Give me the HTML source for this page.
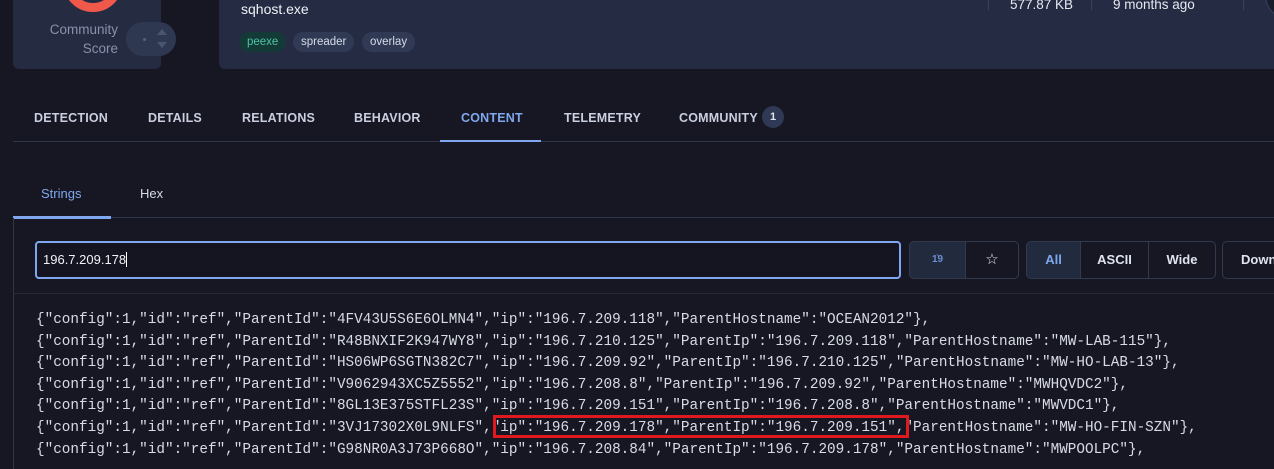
<!DOCTYPE html>
<html><head><meta charset="utf-8"><style>
*{margin:0;padding:0;box-sizing:border-box}
body{width:1274px;height:469px;overflow:hidden;background:#161722;font-family:"Liberation Sans","DejaVu Sans",sans-serif;position:relative;color:#d0d4e0}
.a{position:absolute;white-space:nowrap}
.card{position:absolute;background:#252c42;border-radius:6px}
.tab{position:absolute;top:111px;font-size:12.5px;font-weight:bold;color:#c9cee0;letter-spacing:.2px}
.tag{position:absolute;top:32px;height:20px;border-radius:10px;background:#303a55;color:#d6dbe8;font-size:11.5px;line-height:20px;padding:0 8px}
.btn{position:absolute;top:241px;height:38px;border:1px solid #323a50;font-size:13px;font-weight:bold;color:#e0e4ef;text-align:center;line-height:36px}
.mono{position:absolute;left:36px;font-family:"Liberation Mono",monospace;font-size:14.33px;color:#d8dbe4;white-space:pre;line-height:21.6px}
</style></head><body>
<div class="card" style="left:13px;top:-20px;width:148px;height:89px"></div>
<div class="a" style="left:63px;top:-48px;width:60px;height:60px;border-radius:50%;border:9px solid #f0584a"></div>
<div class="a" style="left:20px;top:20px;width:98px;text-align:right;font-size:13.5px;line-height:19px;color:#8991ab">Community<br>Score</div>
<div class="a" style="left:126px;top:22px;width:50px;height:34px;border-radius:17px;background:#2f3851"></div>
<div class="a" style="left:143px;top:38px;width:3px;height:3px;border-radius:50%;background:#56607a"></div>
<div class="a" style="left:157px;top:29px;width:0;height:0;border-left:5px solid transparent;border-right:5px solid transparent;border-bottom:6px solid #4b5570"></div>
<div class="a" style="left:157px;top:42px;width:0;height:0;border-left:5px solid transparent;border-right:5px solid transparent;border-top:6px solid #4b5570"></div>
<div class="card" style="left:219px;top:-20px;width:1080px;height:89px;background:#252b42"></div>
<div class="a" style="left:241px;top:1px;font-size:14px;color:#f0f2f8">sqhost.exe</div>
<div class="tag" style="left:239px;background:#133a36;color:#4fc4a2">peexe</div>
<div class="tag" style="left:293px">spreader</div>
<div class="tag" style="left:362px">overlay</div>
<div class="a" style="left:988px;top:0;width:1px;height:10px;background:#3a4259"></div>
<div class="a" style="left:1091px;top:0;width:1px;height:10px;background:#3a4259"></div>
<div class="a" style="left:1243px;top:0;width:1px;height:10px;background:#3a4259"></div>
<div class="a" style="left:1010px;top:-3px;font-size:13.5px;color:#e6e9f2">577.87 KB</div>
<div class="a" style="left:1113px;top:-3px;font-size:13.5px;color:#e6e9f2">9 months ago</div>
<div class="a" style="left:1265px;top:-30px;width:50px;height:50px;border-radius:50%;background:#1a1d2b;border:1px solid #39405a"></div>

<div class="tab" style="left:34px">DETECTION</div>
<div class="tab" style="left:148px">DETAILS</div>
<div class="tab" style="left:242px">RELATIONS</div>
<div class="tab" style="left:354px">BEHAVIOR</div>
<div class="tab" style="left:461px;color:#7fa7ef">CONTENT</div>
<div class="tab" style="left:564px">TELEMETRY</div>
<div class="tab" style="left:679px">COMMUNITY</div>
<div class="a" style="left:762px;top:106px;width:22px;height:22px;border-radius:50%;background:#2f3955;color:#dfe3ee;font-size:11px;font-weight:bold;text-align:center;line-height:22px">1</div>
<div class="a" style="left:13px;top:141px;width:1261px;height:1px;background:#2f3548"></div>
<div class="a" style="left:440px;top:140px;width:101px;height:2px;background:#7fa7ef"></div>

<div class="a" style="left:41px;top:186px;font-size:13px;color:#7fa7ef">Strings</div>
<div class="a" style="left:140px;top:186px;font-size:13px;color:#d6dbe8">Hex</div>
<div class="a" style="left:13px;top:217px;width:1261px;height:1px;background:#2f3548"></div>
<div class="a" style="left:13px;top:216px;width:98px;height:3px;background:#7fa7ef"></div>
<div class="a" style="left:13px;top:218px;width:1px;height:251px;background:#2f3548"></div>

<div class="a" style="left:35px;top:241px;width:866px;height:38px;border:2px solid #7fa7ef;border-radius:4px;background:#141520"></div>
<div class="a" style="left:43px;top:252px;font-size:13px;color:#f0f2f8">196.7.209.178<span style="display:inline-block;width:1px;height:15px;background:#fff;vertical-align:-3px"></span></div>
<div class="btn" style="left:909px;width:57px;border-radius:5px 0 0 5px;background:#222a3e;color:#6d8fd0;font-size:10px">1̇9</div>
<div class="btn" style="left:965px;width:54px;border-radius:0 5px 5px 0;font-size:15px;font-weight:normal">☆</div>
<div class="btn" style="left:1026px;width:55px;border-radius:5px 0 0 5px;background:#222a3e;color:#7fa7ef">All</div>
<div class="btn" style="left:1080px;width:69px">ASCII</div>
<div class="btn" style="left:1148px;width:68px;border-radius:0 5px 5px 0">Wide</div>
<div class="btn" style="left:1222px;width:80px;border-radius:5px;text-align:left;padding-left:18px">Download</div>
<div class="a" style="left:13px;top:293px;width:1261px;height:1px;background:#262b3c"></div>

<div class="mono" style="top:310px">{"config":1,"id":"ref","ParentId":"4FV43U5S6E6OLMN4","ip":"196.7.209.118","ParentHostname":"OCEAN2012"},
{"config":1,"id":"ref","ParentId":"R48BNXIF2K947WY8","ip":"196.7.210.125","ParentIp":"196.7.209.118","ParentHostname":"MW-LAB-115"},
{"config":1,"id":"ref","ParentId":"HS06WP6SGTN382C7","ip":"196.7.209.92","ParentIp":"196.7.210.125","ParentHostname":"MW-HO-LAB-13"},
{"config":1,"id":"ref","ParentId":"V9062943XC5Z5552","ip":"196.7.208.8","ParentIp":"196.7.209.92","ParentHostname":"MWHQVDC2"},
{"config":1,"id":"ref","ParentId":"8GL13E375STFL23S","ip":"196.7.209.151","ParentIp":"196.7.208.8","ParentHostname":"MWVDC1"},
{"config":1,"id":"ref","ParentId":"3VJ17302X0L9NLFS","ip":"196.7.209.178","ParentIp":"196.7.209.151","ParentHostname":"MW-HO-FIN-SZN"},
{"config":1,"id":"ref","ParentId":"G98NR0A3J73P668O","ip":"196.7.208.84","ParentIp":"196.7.209.178","ParentHostname":"MWPOOLPC"},</div>
<div class="a" style="left:493px;top:415px;width:416px;height:23px;border:3px solid #e0191f"></div>
</body></html>
